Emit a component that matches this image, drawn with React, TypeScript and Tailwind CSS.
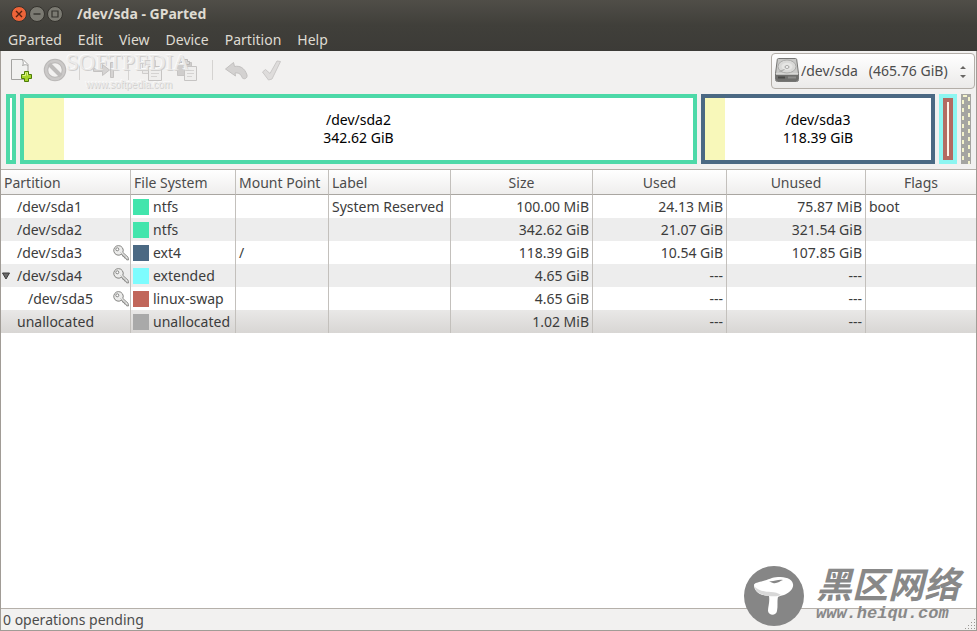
import type { ReactNode } from "react";
import clsx from "clsx";

type Partition = {
  name: string;
  color: string;
  fs: string;
  mount?: string;
  label?: string;
  size: string;
  used: string;
  unused: string;
  flags?: string;
  locked?: boolean;
  open?: boolean;
  child?: boolean;
  selected?: boolean;
};

const partitions: Partition[] = [
  { name: "/dev/sda1", color: "bg-[#42e5ac]", fs: "ntfs", label: "System Reserved", size: "100.00 MiB", used: "24.13 MiB", unused: "75.87 MiB", flags: "boot" },
  { name: "/dev/sda2", color: "bg-[#42e5ac]", fs: "ntfs", size: "342.62 GiB", used: "21.07 GiB", unused: "321.54 GiB" },
  { name: "/dev/sda3", color: "bg-[#4b6983]", fs: "ext4", mount: "/", size: "118.39 GiB", used: "10.54 GiB", unused: "107.85 GiB", locked: true },
  { name: "/dev/sda4", color: "bg-[#7dfcfe]", fs: "extended", size: "4.65 GiB", used: "---", unused: "---", locked: true, open: true },
  { name: "/dev/sda5", color: "bg-[#c1665a]", fs: "linux-swap", size: "4.65 GiB", used: "---", unused: "---", locked: true, child: true },
  { name: "unallocated", color: "bg-[#a9a9a9]", fs: "unallocated", size: "1.02 MiB", used: "---", unused: "---", selected: true },
];

const menus = ["GParted", "Edit", "View", "Device", "Partition", "Help"];

function App() {
  return (
    <div className="relative flex min-h-screen flex-col border-x border-b border-[#a19c96] bg-[#f2f1f0] font-['Noto_Sans',sans-serif] text-sm text-[#3c3c3c]">
      <TitleBar />
      <Toolbar />
      <DiskMap />
      <main className="flex-1 border-y border-[#b5b0aa] bg-white">
        <PartitionTable />
      </main>
      <footer className="flex h-[21px] items-center justify-between pl-[2px] text-[#4c4c4c]">
        <p>0 operations pending</p>
        <ResizeGrip />
      </footer>
      <SiteMark />
    </div>
  );
}

function TitleBar() {
  return (
    <header className="-mx-px bg-linear-to-b from-[#504e48] via-[#403f3a] to-[#3c3b37] text-[#dfdbd2]">
      <div className="flex h-7 items-center gap-[2px] pl-[11px]">
        <WindowButton label="Close">
          <circle cx="8" cy="8" r="7.5" fill="#ee6439" stroke="#34322d" />
          <path d="M5 5l6 6M11 5l-6 6" stroke="#56210f" strokeWidth="1.4" />
        </WindowButton>
        <WindowButton label="Minimize">
          <circle cx="8" cy="8" r="7.5" fill="#7b7a72" stroke="#34322d" />
          <path d="M4.500 8h7" stroke="#34332e" strokeWidth="1.4" />
        </WindowButton>
        <WindowButton label="Maximize">
          <circle cx="8" cy="8" r="7.5" fill="#7b7a72" stroke="#34322d" />
          <path d="M5 5h6v6H5z" stroke="#34332e" strokeWidth="1.2" />
        </WindowButton>
        <h1 className="ml-3 font-bold">/dev/sda - GParted</h1>
      </div>
      <nav className="flex h-[23px] items-center gap-4 pl-2">
        {menus.map((menu) => (
          <button key={menu}>{menu}</button>
        ))}
      </nav>
    </header>
  );
}

function WindowButton({ label, children }: { label: string; children: ReactNode }) {
  return (
    <button aria-label={label}>
      <svg viewBox="0 0 16 16" fill="none" className="h-4 w-4">
        {children}
      </svg>
    </button>
  );
}

function Toolbar() {
  return (
    <div className="relative flex h-[39px] items-center justify-between pr-px pb-px pl-[7px]">
      <div className="flex items-center gap-[11px]">
        <ToolButton label="New">
          <path d="M3.500 1.500h11.500l5 5v15h-16.500z" fill="#f1f1f0" stroke="#a3a3a1" />
          <path d="M14.500 2c1 2 1 4 0 5.500 2-1 4-1 5.500 0" fill="#fff" stroke="#a3a3a1" />
          <path d="M16.500 13.500h4v3h3v4h-3v3h-4v-3h-3v-4h3z" fill="#a5d42c" stroke="#4d7d08" />
          <path d="M17.500 14.500v3h-3M18.500 14.500h1v3" stroke="#dcf58b" />
        </ToolButton>
        <ToolButton label="Delete">
          <circle cx="12" cy="12" r="9" stroke="#bab8b7" strokeWidth="4.500" />
          <circle cx="12" cy="12" r="9" stroke="#cbc9c8" strokeWidth="2.500" />
          <path d="M6 6l12 12" stroke="#bdbbba" strokeWidth="4" />
        </ToolButton>
        <Separator />
        <ToolButton label="Resize/Move">
          <path d="M1.500 10.500h9v-4l7 5.500-7 5.500v-4h-9z" fill="#d5d3d2" stroke="#c4c2c1" />
          <path d="M18.500 4.500h3v15h-3z" fill="#d5d3d2" stroke="#c4c2c1" />
        </ToolButton>
        <Separator />
        <ToolButton label="Copy">
          <path d="M1.500 2.500h13v13h-13z" fill="#eae9e8" stroke="#cfcdcc" />
          <path d="M4 6.500h8M4 9.500h8M4 12.500h8" stroke="#dddbda" />
          <path d="M7.500 8.500h13v14h-13z" fill="#efeeed" stroke="#c6c4c3" />
          <path d="M10 12.500h8M10 15.500h8M10 18.500h6" stroke="#d5d3d2" />
        </ToolButton>
        <ToolButton label="Paste">
          <path d="M1.500 4.500h14v13h-14z" fill="#cfcdcc" stroke="#c6c4c3" />
          <path d="M5.500 6.500v-3h2v-2h4v2h2v3z" fill="#dad8d7" stroke="#bbb9b8" />
          <path d="M8.500 8.500h12v14h-12z" fill="#efeeed" stroke="#c6c4c3" />
          <path d="M11 12.500h7M11 15.500h7M11 18.500h5" stroke="#d5d3d2" />
        </ToolButton>
        <Separator />
        <ToolButton label="Undo">
          <path
            d="M.5 11l8-6.500 1 4c5-1 10 1 12.500 8.500.6 3.500-3 5-5 2.500-1-3.500-3.500-5-7-4.500l.5 3z"
            fill="#d4d2d1"
            stroke="#c2c0bf"
            strokeLinejoin="round"
          />
        </ToolButton>
        <ToolButton label="Apply">
          <path
            d="M2.500 14l3-2.500 4.500 4 7-12.500 3.500.5-8.500 17.500-3.500 1z"
            fill="#dedcdb"
            stroke="#cac8c7"
            strokeLinejoin="round"
          />
        </ToolButton>
      </div>

      <div className="relative mt-px">
        <select
          aria-label="Device"
          className="h-9 w-[204px] appearance-none rounded border border-[#b3aea8] bg-linear-to-b from-white to-[#ebeae9] pl-[29px] text-sm text-[#4c4c4c]"
        >
          <option>/dev/sda &nbsp;&nbsp;(465.76 GiB)</option>
        </select>
        <HardDisk />
        <svg viewBox="0 0 8 14" className="pointer-events-none absolute top-3 right-2 h-[14px] w-2">
          <path d="M1 4l3-3 3 3zM1 10l3 3 3-3z" fill="#686664" />
        </svg>
      </div>

      <div className="pointer-events-none absolute top-0 left-[65px] font-['Liberation_Serif',serif] text-[#ebeae9] [text-shadow:1px_1px_0_#cfcecd,-1px_-1px_0_#fafafa]">
        <p className="text-[23px] leading-6">SOFTPEDIA</p>
        <p className="pl-5 font-['Liberation_Sans',sans-serif] text-[10px] leading-5">
          www.softpedia.com
        </p>
      </div>
    </div>
  );
}

function ToolButton({ label, children }: { label: string; children: ReactNode }) {
  return (
    <button aria-label={label} title={label}>
      <svg viewBox="0 0 24 24" fill="none" className="h-6 w-6">
        {children}
      </svg>
    </button>
  );
}

function Separator() {
  return <span className="mx-px h-5 w-px bg-[#d5d3d1]" />;
}

function HardDisk() {
  return (
    <svg viewBox="0 0 24 24" fill="none" className="pointer-events-none absolute top-[5px] left-1 h-6 w-6">
      <path d="M3.500.5h17q1 0 1.200 1l1.800 14v6q0 2-2 2h-19q-2 0-2-2v-6l1.800-14q.2-1 1.200-1z" fill="#c9c9c7" stroke="#767674" />
      <path d="M1 16.500h22v5q0 1.500-1.500 1.500h-19Q1 23 1 21.500z" fill="#6f6f6d" />
      <path d="M1 16h22" stroke="#e6e6e4" />
      <ellipse cx="12" cy="8.500" rx="9" ry="6.500" fill="#d9d9d7" stroke="#ababa9" />
      <ellipse cx="12" cy="8.500" rx="5.500" ry="3.800" fill="#e6e6e4" />
      <ellipse cx="12" cy="9" rx="2" ry="1.400" fill="#fff" stroke="#a0a09e" />
      <path d="M4.500 13.500l5-2" stroke="#a5a5a3" />
      <path d="M3 19.500h7" stroke="#4a4a48" strokeWidth="2" />
      <path d="M13 19.500h8" stroke="#8d8d8b" strokeWidth="2" />
    </svg>
  );
}

function DiskMap() {
  return (
    <section aria-label="Disk layout" className="flex h-[79px] gap-1 px-[5px] pt-1 pb-[5px] text-black">
      <div className="w-[10px] border-4 border-[#4dd9a8] bg-white" />
      <DiskBlock name="/dev/sda2" size="342.62 GiB" className="grow-[669] border-[#4dd9a8]" used="w-[6%]" />
      <DiskBlock name="/dev/sda3" size="118.39 GiB" className="grow-[226] border-[#4b6983]" used="w-[9%]" />
      <div className="w-[18px] border-4 border-[#8df6f1]">
        <div className="h-full border-4 border-[#b36a61] bg-[#fdf3e8]" />
      </div>
      <svg className="h-full w-[10px] bg-[#a5a5a1]">
        <path d="M2 2h4" stroke="#f4f3cb" strokeWidth="2" />
        <path d="M2 6v64" stroke="#f4f3cb" strokeWidth="2" strokeDasharray="4 4" />
        <path d="M8 3v67" stroke="#f4f3cb" strokeWidth="2" strokeDasharray="4 4" />
      </svg>
    </section>
  );
}

function DiskBlock({ name, size, className, used }: { name: string; size: string; className: string; used: string }) {
  return (
    <div className={clsx("relative flex basis-0 flex-col items-center justify-center border-4 bg-white leading-[18px]", className)}>
      <span className={clsx("absolute inset-y-0 left-0 bg-[#f8f8ba]", used)} />
      <p>{name}</p>
      <p>{size}</p>
    </div>
  );
}

function PartitionTable() {
  const head = "border-r border-b border-[#c3c0bc] border-b-[#a9a6a1] pt-[2px] font-normal last:border-r-0";
  const cell = "border-r border-[#c3c0bc] px-[3px] last:border-r-0";

  return (
    <table className="w-full table-fixed border-separate border-spacing-0 whitespace-nowrap">
      <colgroup>
        <col className="w-[130px]" />
        <col className="w-[105px]" />
        <col className="w-[93px]" />
        <col className="w-[122px]" />
        <col className="w-[142px]" />
        <col className="w-[134px]" />
        <col className="w-[139px]" />
        <col />
      </colgroup>
      <thead>
        <tr className="h-[25px] bg-linear-to-b from-white to-[#eeedec] text-[#4c4c4c]">
          <th className={clsx(head, "pl-[3px] text-left")}>Partition</th>
          <th className={clsx(head, "pl-[3px] text-left")}>File System</th>
          <th className={clsx(head, "pl-[3px] text-left")}>Mount Point</th>
          <th className={clsx(head, "pl-[3px] text-left")}>Label</th>
          <th className={head}>Size</th>
          <th className={head}>Used</th>
          <th className={head}>Unused</th>
          <th className={head}>Flags</th>
        </tr>
      </thead>
      <tbody>
        {partitions.map((p) => (
          <tr
            key={p.name}
            className={clsx(
              "h-[23px]",
              p.selected ? "bg-linear-to-b from-[#e9e8e7] to-[#d8d6d4]" : "even:bg-[#ededed]",
            )}
          >
            <td className="border-r border-[#c3c0bc] p-0">
              <div className="flex items-center">
                <span className={clsx("flex shrink-0 items-center pl-px", p.child ? "w-[27px]" : "w-4")}>
                  {p.open && (
                    <svg viewBox="0 0 8 8" className="h-2 w-2">
                      <path d="M.5 1h7L4 7z" fill="#6b6b6b" stroke="#3c3c3c" />
                    </svg>
                  )}
                </span>
                <span className="flex-1">{p.name}</span>
                {p.locked && <KeyIcon />}
              </div>
            </td>
            <td className="border-r border-[#c3c0bc] p-0 pl-[2px]">
              <div className="flex items-center gap-1">
                <span className={clsx("h-4 w-4 shrink-0", p.color)} />
                {p.fs}
              </div>
            </td>
            <td className={cell}>{p.mount}</td>
            <td className={cell}>{p.label}</td>
            <td className={clsx(cell, "text-right")}>{p.size}</td>
            <td className={clsx(cell, "text-right")}>{p.used}</td>
            <td className={clsx(cell, "text-right")}>{p.unused}</td>
            <td className={cell}>{p.flags}</td>
          </tr>
        ))}
      </tbody>
    </table>
  );
}

function KeyIcon() {
  return (
    <svg viewBox="0 0 16 16" fill="none" className="mr-px h-4 w-4 shrink-0">
      <path
        d="M5.500.6a4.800 4.800 0 1 0 2.700 8.800l1.300.6.3 1.300 1.400.2.3 1.500 1.500.2.500 1.500 1.900.3-.3-2.700-5.300-4.900A4.800 4.800 0 0 0 5.500.6z"
        fill="#ececeb"
        stroke="#858583"
      />
      <circle cx="4.300" cy="4.300" r="1.500" fill="#fff" stroke="#858583" />
      <path d="M7.500 7.500l5.500 5" stroke="#b5b5b3" />
    </svg>
  );
}

function ResizeGrip() {
  return (
    <svg viewBox="0 0 12 12" className="h-3 w-3 self-end">
      <path
        d="M10 1.500h1M7 4.500h1M10 4.500h1M4 7.500h1M7 7.500h1M10 7.500h1M1 10.500h1M4 10.500h1M7 10.500h1M10 10.500h1"
        stroke="#9b9893"
      />
    </svg>
  );
}

function SiteMark() {
  return (
    <div className="pointer-events-none absolute right-4 bottom-1 flex items-center gap-3 text-[#888]">
      <svg viewBox="0 0 60 60" className="h-[60px] w-[60px]">
        <circle cx="30" cy="30" r="30" fill="#868686" />
        <path
          d="M10 19c0-2 5-3 9-4 5-1 9-4 15-4 7 0 14 1 15 7 1 5-4 9-9 11-3 1-5 1-6 2-1 4 0 9-1 14-1 5-8 5-9 0 0-5 2-9 1-15-8 0-15-4-15-11z"
          fill="#fff"
        />
        <path d="M11 21c4 4 11 5 16 5 4 0 7 1 10 3-4 2-9 1-13 1-7-1-13-4-13-9z" fill="#d8d8d8" />
        <path d="M25 15c4 1 9-2 14-1-3 1-6 4-10 3-2-1-3-1-4-2z" fill="#868686" />
      </svg>
      <div className="italic">
        <p className="font-['Liberation_Sans','Noto_Sans_CJK_SC',sans-serif] text-[36px] leading-9 font-bold">
          黑区网络
        </p>
        <p className="font-['Liberation_Mono',monospace] text-[17px] leading-5 font-bold">www.heiqu.com</p>
      </div>
    </div>
  );
}

export default App;
